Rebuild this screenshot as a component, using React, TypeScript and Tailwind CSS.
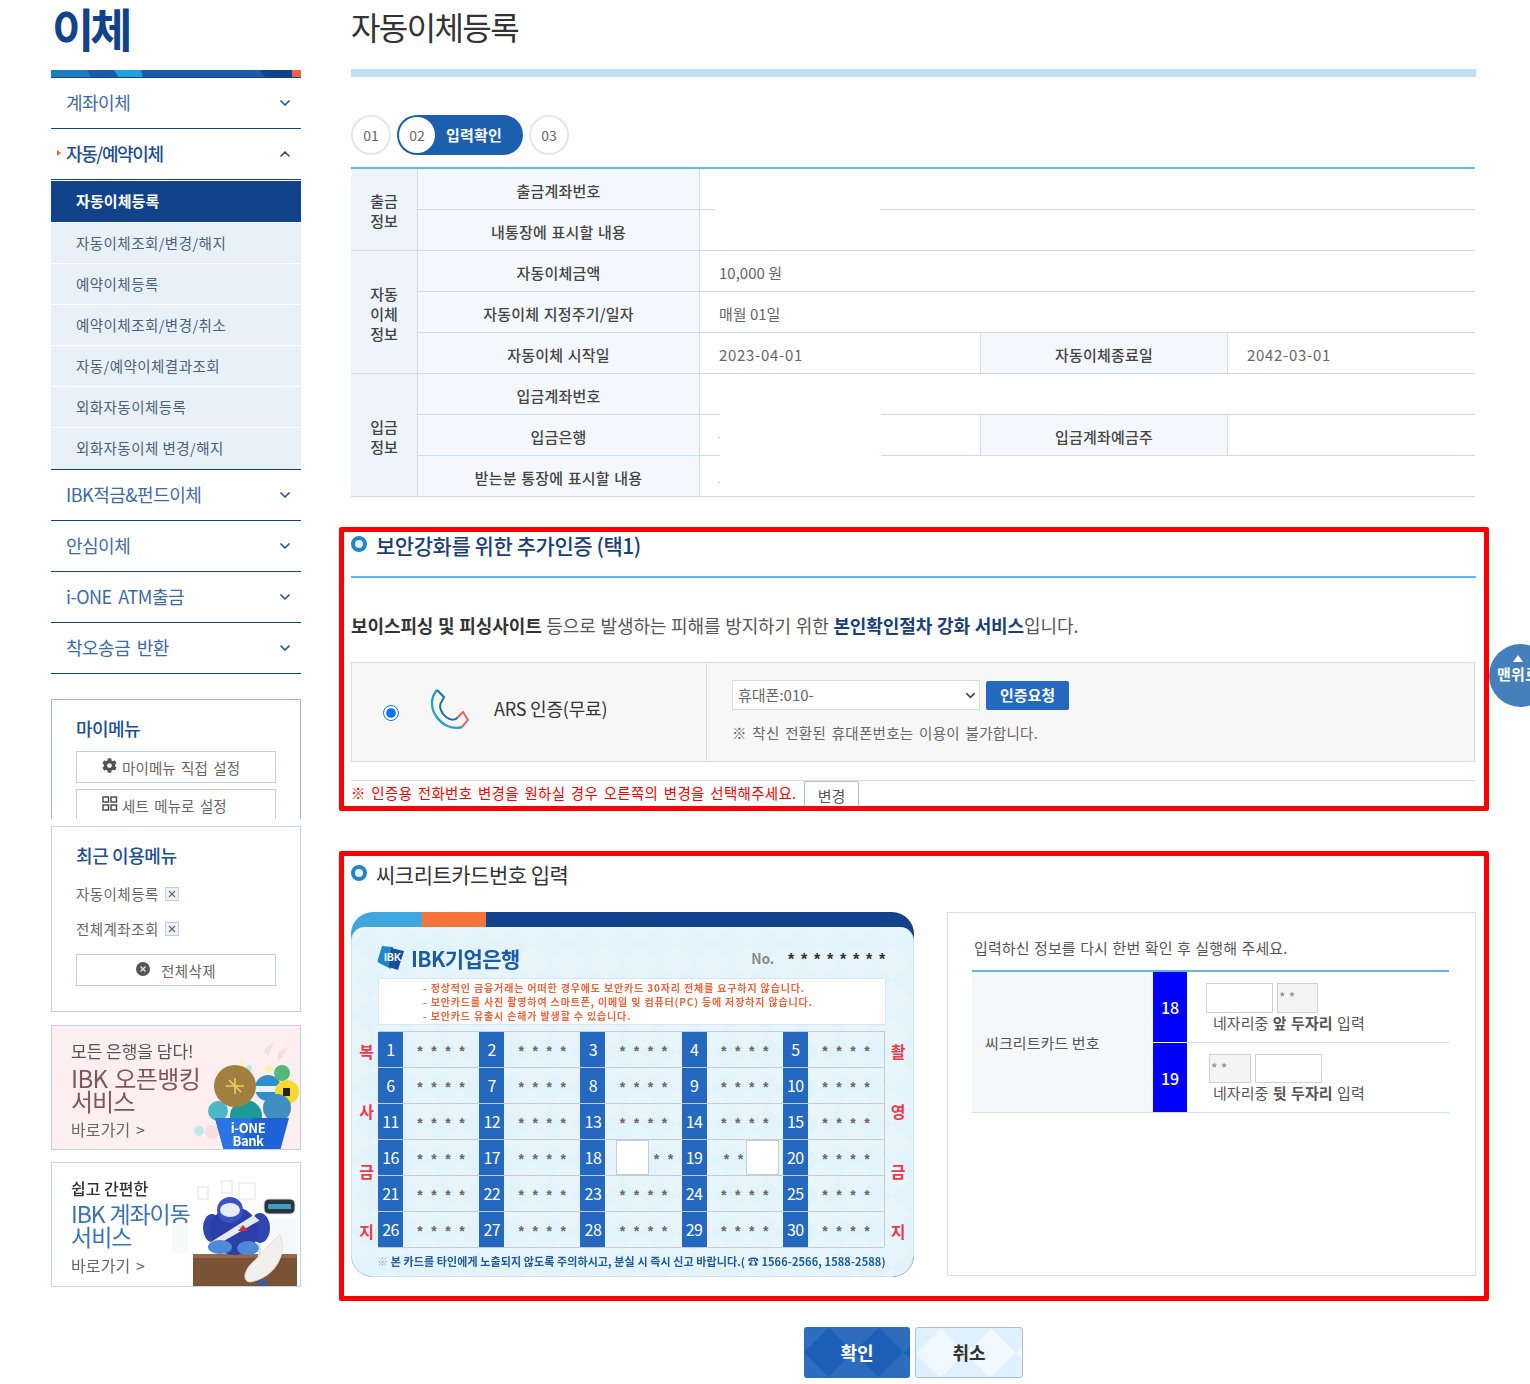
import React from "react";
import { ChevronDown, ChevronUp } from "lucide-react";
import { FaCog } from "react-icons/fa";

const subMenu = ["자동이체조회/변경/해지", "예약이체등록", "예약이체조회/변경/취소", "자동/예약이체결과조회", "외화자동이체등록", "외화자동이체 변경/해지"];
const lowerMenu = ["IBK적금&펀드이체", "안심이체", "i-ONE ATM출금", "착오송금 반환"];

function MenuRow({ label }: { label: string }) {
  return (
    <div className="h-[51px] border-b border-[#12438a] flex items-center justify-between pl-[15px] pr-[8px] pb-[1px]">
      <span className="text-[18px] tracking-[-0.5px] [word-spacing:3px] text-[#3d6aa6]">{label}</span>
      <ChevronDown size={16} strokeWidth={2.6} className="text-[#2a5590]" />
    </div>
  );
}

function Sidebar() {
  return (
    <aside className="w-[250px] flex-none">
      <div className="h-[70px] pl-[1px] text-[46px] leading-[54px] font-bold tracking-[-4px] text-[#12438a]">이체</div>
      <svg width="250" height="8" viewBox="0 0 250 8" className="block">
        <rect width="250" height="8" fill="#1a5ca8" />
        <polygon points="0,0 36,0 41,8 0,8" fill="#1d7cc4" />
        <polygon points="63,0 90,0 92,8 68,8" fill="#20a0df" />
        <polygon points="209,0 241,0 241,8 215,8" fill="#12438a" />
        <rect x="241" width="9" height="7" fill="#f4613e" />
        <rect y="7" width="250" height="1" fill="#12438a" />
      </svg>
      <MenuRow label="계좌이체" />
      <div className="h-[50px] flex items-center justify-between pl-[15px] pr-[8px] pb-[1px] relative">
        <span className="absolute left-[6px] top-[21px] w-0 h-0 border-y-[3px] border-y-transparent border-l-[4px] border-l-[#f4613e]" />
        <span className="text-[18px] tracking-[-1.4px] font-medium text-[#1c4f94]">자동/예약이체</span>
        <ChevronUp size={16} strokeWidth={2.6} className="text-[#2a5590]" />
      </div>
      <div className="h-[1px] bg-[#12438a]" />
      <div className="h-[1px]" />
      <div className="h-[41px] bg-[#12438a] pl-[25px] pb-[1px] flex items-center text-[15px] font-bold tracking-[0.1px] text-white">자동이체등록</div>
      {subMenu.map((s) => (
        <div key={s} className="h-[41px] bg-[#e8f1f8] border-t border-white pl-[25px] pb-[1px] flex items-center text-[14.5px] tracking-[0.45px] text-[#4a5f7d]">{s}</div>
      ))}
      <div className="h-[1px] bg-[#e8f1f8]" />
      <div className="h-[1px] bg-[#12438a]" />
      {lowerMenu.map((m) => <MenuRow key={m} label={m} />)}

      <div className="mt-[25px] h-[120px] overflow-hidden border-x border-t border-[#a3b2c6] pl-[24px] pr-[24px]">
        <div className="h-[51px] pt-[14px] text-[18px] leading-[28px] font-medium tracking-[-0.6px] text-[#1c4f94]">마이메뉴</div>
        <div className="h-[32px] pt-[1px] border border-[#bed0e5] flex items-center pl-[25px] gap-[5px] text-[14.5px] tracking-[0.1px] [word-spacing:2px] text-[#666]">
          <FaCog size={15} className="text-[#555] -translate-y-[2px]" />
          마이메뉴 직접 설정
        </div>
        <div className="mt-[6px] h-[32px] pt-[2px] border border-[#bed0e5] flex items-center pl-[25px] gap-[4px] text-[14.5px] tracking-[0.1px] [word-spacing:2px] text-[#666]">
          <svg width="16" height="15" viewBox="0 0 16 15" className="-translate-y-[3px]">
            <g fill="none" stroke="#444" strokeWidth="1.4">
              <rect x="1" y="1" width="5.5" height="5" />
              <rect x="9" y="1" width="5.5" height="5" />
              <rect x="1" y="9" width="5.5" height="5" />
              <rect x="9" y="9" width="5.5" height="5" />
            </g>
          </svg>
          세트 메뉴로 설정
        </div>
      </div>

      <div className="mt-[7px] h-[186px] border border-[#c1d2e6] px-[24px]">
        <div className="h-[50px] pt-[14px] text-[18px] leading-[28px] font-medium tracking-[-0.4px] text-[#1c4f94]">최근 이용메뉴</div>
        {["자동이체등록", "전체계좌조회"].map((s) => (
          <div key={s} className="h-[35px] pb-[2px] flex items-center gap-[6px] text-[14.5px] tracking-[0.45px] text-[#666]">
            {s}
            <span className="w-[14px] h-[14px] border border-[#bcd0e6] bg-[#eef2f7] flex items-center justify-center text-[#666]">
              <svg width="8" height="8" viewBox="0 0 8 8"><path d="M1 1 L7 7 M7 1 L1 7" stroke="#666" strokeWidth="1.1" /></svg>
            </span>
          </div>
        ))}
        <div className="mt-[7px] h-[32px] pt-[1px] border border-[#bed0e5] flex items-center justify-center gap-[11px] text-[14.5px] tracking-[0.45px] text-[#666]">
          <svg width="14" height="14" viewBox="0 0 14 14" className="-translate-y-[2px]">
            <circle cx="7" cy="7" r="7" fill="#555" />
            <path d="M4.5 4.5 L9.5 9.5 M9.5 4.5 L4.5 9.5" stroke="#ddd" strokeWidth="1.5" />
          </svg>
          전체삭제
        </div>
      </div>

      <div className="mt-[13px] h-[125px] relative overflow-hidden border border-[#bfd3ea] bg-[#fdeef0] pl-[19px]">
        <div className="blur-[0.4px]">
          <div className="pt-[12px] text-[17px] leading-[26px] text-[#555]">모든 은행을 담다!</div>
          <div className="mt-[2px] text-[24px] leading-[24px] tracking-[-0.6px] [word-spacing:2px] text-[#80565a]">IBK 오픈뱅킹</div>
          <div className="text-[24px] leading-[22px] tracking-[-1px] text-[#80565a]">서비스</div>
          <div className="mt-[4px] text-[16px] leading-[26px] tracking-[0.1px] [word-spacing:2px] text-[#666]">바로가기 &gt;</div>
        </div>
        <svg width="250" height="125" viewBox="0 0 250 125" className="absolute left-0 top-0 blur-[0.4px]">
          <path d="M212 24 L222 16 L216 30 Z M226 26 L238 20 L226 36 Z" fill="#f6dde0" />
          <circle cx="190" cy="37" r="3" fill="#fbf3c6" /><circle cx="197" cy="42" r="3" fill="#bde9e4" /><circle cx="217" cy="43" r="4" fill="#fbf0b0" />
          <circle cx="147" cy="105" r="5" fill="#bfe9e8" /><circle cx="160" cy="106" r="7" fill="#fbdde0" />
          <circle cx="166" cy="85" r="10" fill="#4fb6c6" />
          <circle cx="194" cy="90" r="16" fill="#1d9a9a" />
          <circle cx="216" cy="62" r="13" fill="#2e8fce" />
          <rect x="203" y="60" width="26" height="6" fill="#e5f3fb" />
          <circle cx="230" cy="47" r="8" fill="#55b87a" />
          <circle cx="235" cy="66" r="12" fill="#f8d92c" />
          <rect x="231" y="62" width="7" height="8" fill="#222" />
          <circle cx="225" cy="82" r="14" fill="#3f8fc0" />
          <circle cx="183" cy="60" r="21" fill="#a1803f" />
          <path d="M174 60 L192 60 M183 52 L183 68 M177 54 L189 66" stroke="#f6c960" strokeWidth="1.6" />
          <polygon points="163,92 237,92 228,125 172,125" fill="#1e62d8" />
          <polygon points="163,92 200,92 185,125 172,125" fill="#2a74e6" />
        </svg>
        <div className="absolute left-[168px] top-[95px] w-[56px] text-center text-white font-bold text-[13px] leading-[13px] tracking-[-0.4px] blur-[0.3px]">i-ONE<br />Bank</div>
      </div>

      <div className="mt-[12px] h-[125px] relative overflow-hidden border border-[#bfd3ea] bg-white pl-[19px]">
        <div className="blur-[0.4px]">
          <div className="pt-[12px] text-[16px] leading-[26px] font-medium text-[#333]">쉽고 간편한</div>
          <div className="text-[23px] leading-[24px] tracking-[-1.1px] [word-spacing:1px] text-[#3b74b6]">IBK 계좌이동</div>
          <div className="text-[23px] leading-[22px] tracking-[-1px] text-[#3b74b6]">서비스</div>
          <div className="mt-[5px] text-[16px] leading-[26px] tracking-[0.1px] [word-spacing:2px] text-[#666]">바로가기 &gt;</div>
        </div>
        <svg width="250" height="125" viewBox="0 0 250 125" className="absolute left-0 top-0 blur-[0.4px]">
          <g fill="none" stroke="#eef0f3" strokeWidth="2">
            <rect x="146" y="24" width="10" height="12" /><rect x="170" y="18" width="10" height="12" /><rect x="187" y="20" width="16" height="16" />
          </g>
          <rect x="120" y="60" width="16" height="30" fill="#f8f9fa" /><rect x="220" y="55" width="24" height="35" fill="#f6f7f8" />
          <rect x="141" y="91" width="104" height="34" fill="#7a5236" />
          <rect x="141" y="91" width="104" height="4" fill="#94684a" />
          <rect x="206" y="50" width="3" height="44" fill="#e0e0e0" />
          <rect x="212" y="36" width="31" height="15" rx="5" fill="#2b3340" stroke="#ddd" />
          <rect x="216" y="41" width="23" height="5" fill="#3ca0b8" />
          <ellipse cx="160" cy="65" rx="9" ry="14" fill="#2f45b4" />
          <ellipse cx="208" cy="65" rx="10" ry="15" fill="#2f45b4" />
          <ellipse cx="182" cy="68" rx="24" ry="24" fill="#2a3fa8" />
          <path d="M155 56 L205 72 L205 80 L155 62 Z" fill="#e6e9f0" transform="rotate(-50 182 66)" />
          <circle cx="178" cy="47" r="13" fill="#3a52c4" />
          <ellipse cx="178" cy="47" rx="10" ry="7" fill="#e8eef8" />
          <polygon points="186,68 196,68 191,62" fill="#d83030" />
          <ellipse cx="168" cy="84" rx="12" ry="7" fill="#4e8ad8" />
          <ellipse cx="196" cy="85" rx="11" ry="7" fill="#4e8ad8" />
          <path d="M228 72 C236 92 222 115 198 119 C190 118 192 108 200 100 C210 92 216 80 228 72 Z" fill="#f2f0ee" stroke="#e3dcd4" />
          <path d="M204 118 L210 125 L216 118 Z" fill="#2a5fb8" />
        </svg>
      </div>
    </aside>
  );
}

function Lbl({ children, className = "" }: { children: React.ReactNode; className?: string }) {
  return <td className={`pt-[4px] border-b border-r border-[#cddbe8] bg-[#f4f8fc] text-center text-[15px] font-medium tracking-[0.2px] [word-spacing:1px] text-[#444] ${className}`}>{children}</td>;
}
function Grp({ rows, children }: { rows: number; children: React.ReactNode }) {
  return <td rowSpan={rows} className="pt-[3px] border-b border-r border-[#cddbe8] bg-[#eef4fb] text-center text-[15px] leading-[20px] font-medium text-[#444]">{children}</td>;
}
function Val({ children, span, className = "" }: { children?: React.ReactNode; span?: number; className?: string }) {
  return <td colSpan={span} className={`pt-[4px] border-b border-[#cddbe8] pl-[19px] text-[15px] text-[#666] ${className}`}>{children}</td>;
}

function InfoTable() {
  return (
    <div className="relative">
      <table className="w-[1124px] table-fixed border-separate border-spacing-0 border-t-2 border-[#62b5e8]">
        <colgroup>
          <col className="w-[67px]" /><col className="w-[282px]" /><col className="w-[280px]" /><col className="w-[248px]" /><col className="w-[247px]" />
        </colgroup>
        <tbody>
          <tr className="h-[41px]"><Grp rows={2}>출금<br />정보</Grp><Lbl>출금계좌번호</Lbl><Val span={3} /></tr>
          <tr className="h-[41px]"><Lbl>내통장에 표시할 내용</Lbl><Val span={3} /></tr>
          <tr className="h-[41px]"><Grp rows={3}>자동<br />이체<br />정보</Grp><Lbl>자동이체금액</Lbl><Val span={3}>10,000 원</Val></tr>
          <tr className="h-[41px]"><Lbl>자동이체 지정주기/일자</Lbl><Val span={3}>매월 01일</Val></tr>
          <tr className="h-[41px]"><Lbl>자동이체 시작일</Lbl><Val className="tracking-[0.7px]">2023-04-01</Val><Lbl className="border-l">자동이체종료일</Lbl><Val className="tracking-[0.7px]">2042-03-01</Val></tr>
          <tr className="h-[41px]"><Grp rows={3}>입금<br />정보</Grp><Lbl>입금계좌번호</Lbl><Val span={3} /></tr>
          <tr className="h-[41px]"><Lbl>입금은행</Lbl><Val /><Lbl className="border-l">입금계좌예금주</Lbl><Val /></tr>
          <tr className="h-[41px]"><Lbl>받는분 통장에 표시할 내용</Lbl><Val span={3} /></tr>
        </tbody>
      </table>
      <div className="absolute left-[364px] top-[38px] w-[165px] h-[6px] bg-white" />
      <div className="absolute left-[369px] top-[243px] w-[161px] h-[46px] bg-white" />
      <div className="absolute left-[367px] top-[270px] w-[2px] h-[1px] bg-[#f3c66d]" />
      <div className="absolute left-[367px] top-[315px] w-[2px] h-[1px] bg-[#f3c66d]" />
    </div>
  );
}

function Star({ n = 4 }: { n?: number }) {
  return (
    <div className="flex gap-[6px] text-[#666] font-['Liberation_Sans',sans-serif] font-bold text-[14px] leading-[14px] pt-[3px]">
      {Array.from({ length: n }).map((_, i) => <span key={i} className="w-[8px] text-center">*</span>)}
    </div>
  );
}

const cellCls = "h-[36px] border-b border-[#c5ccd3] flex items-center justify-center";

function SecurityCard() {
  const cells: React.ReactNode[] = [];
  for (let n = 1; n <= 30; n++) {
    cells.push(<div key={`n${n}`} className="h-[36px] pb-[1px] border-b border-[#c5ccd3] bg-[#2468c0] text-white text-[16px] tracking-[-0.6px] flex items-center justify-center">{n}</div>);
    if (n === 18) {
      cells.push(<div key="s18" className={`${cellCls} justify-start pl-[11px] gap-[3px]`}><div className="w-[33px] h-[35px] bg-white border border-[#c5ccd3]" /><Star n={2} /></div>);
    } else if (n === 19) {
      cells.push(<div key="s19" className={`${cellCls} justify-start pl-[16px] gap-[1px]`}><Star n={2} /><div className="w-[33px] h-[35px] bg-white border border-[#c5ccd3]" /></div>);
    } else {
      cells.push(<div key={`s${n}`} className={cellCls}><Star /></div>);
    }
  }
  return (
    <div className="w-[563px] h-[365px] flex-none rounded-[22px] overflow-hidden bg-[linear-gradient(to_right,#3fa7dc_0,#3fa7dc_71px,#f5743a_71px,#f5743a_135px,#12438a_135px)]">
      <div className="mt-[15px] h-[350px] rounded-t-[14px] rounded-b-[22px] border border-t-0 border-[#cfe3f3] bg-[#e3f3fc] bg-[linear-gradient(45deg,#ffffff33_25%,transparent_25%,transparent_75%,#ffffff33_75%),linear-gradient(-45deg,#ffffff33_25%,transparent_25%,transparent_75%,#ffffff33_75%)] bg-[size:36px_36px] pt-[17px]">
        <div className="h-[28px] flex items-center pl-[25px] pr-[27px]">
          <svg width="28" height="26" viewBox="0 0 28 26">
            <path d="M5 1 L16 2 L14 24 L2 18 Q0 17 1 14 Z" fill="#1f86c8" />
            <path d="M14 3 L27 6 L21 25 L12 22 Z" fill="#164f9c" />
            <text x="7" y="16" fontSize="10" fontWeight="700" fill="#fff" fontFamily="Liberation Sans, sans-serif">IBK</text>
          </svg>
          <span className="ml-[6px] pt-[1px] text-[21px] font-bold tracking-[-0.6px] text-[#1a5ca8] blur-[0.3px]">IBK기업은행</span>
          <span className="ml-auto text-[14px] font-bold text-[#888] tracking-[-0.3px] blur-[0.3px]">No.</span>
          <span className="ml-[13px] flex gap-[5px] font-['Liberation_Sans',sans-serif] font-bold text-[16px] leading-[16px] pt-[3px] text-[#333]">
            {Array.from({ length: 8 }).map((_, i) => <span key={i} className="w-[8px] text-center">*</span>)}
          </span>
        </div>
        <div className="mt-[6px] ml-[26px] w-[508px] h-[47px] pt-[1px] bg-white border border-[#d7e6f2] pl-[44px] flex flex-col justify-center text-[10px] leading-[14px] font-bold tracking-[0.85px] whitespace-nowrap text-[#f0623a] blur-[0.2px]">
          <div>- 정상적인 금융거래는 어떠한 경우에도 보안카드 30자리 전체를 요구하지 않습니다.</div>
          <div>- 보안카드를 사진 촬영하여 스마트폰, 이메일 및 컴퓨터(PC) 등에 저장하지 않습니다.</div>
          <div>- 보안카드 유출시 손해가 발생할 수 있습니다.</div>
        </div>
        <div className="mt-[6px] flex h-[216px]">
          <div className="w-[26px] flex-none flex flex-col items-center gap-[36px] pt-[8px] pl-[3px] text-[16px] leading-[24px] font-bold text-[#f0384a]">
            <span>복</span><span>사</span><span>금</span><span>지</span>
          </div>
          <div className="w-[507px] flex-none grid grid-cols-[25px_1fr_25px_1fr_25px_1fr_25px_1fr_25px_1fr] border-t border-r border-[#c5ccd3] content-start">
            {cells}
          </div>
          <div className="flex-1 flex flex-col items-center gap-[36px] pt-[8px] pr-[2px] text-[16px] leading-[24px] font-bold text-[#f0384a]">
            <span>촬</span><span>영</span><span>금</span><span>지</span>
          </div>
        </div>
        <div className="mt-[4px] ml-[25px] h-[20px] flex items-center whitespace-nowrap text-[11px] font-bold tracking-[0.1px] text-[#1d5aa0] blur-[0.2px]">
          <span className="text-[#9db0c0]">※&nbsp;</span>본 카드를 타인에게 노출되지 않도록 주의하시고, 분실 시 즉시 신고 바랍니다.( ☎ 1566-2566, 1588-2588)
        </div>
      </div>
    </div>
  );
}

function InfoBox() {
  return (
    <div className="w-[529px] h-[364px] flex-none border border-[#cfe1f0] pl-[24px]">
      <div className="h-[57px] pt-[22px] pl-[2px] text-[15px] leading-[26px] tracking-[0.1px] [word-spacing:1px] text-[#555]">입력하신 정보를 다시 한번 확인 후 실행해 주세요.</div>
      <div className="w-[477px] flex border-t-2 border-[#62b5e8] border-b border-b-[#cddfee] text-[15px] text-[#555]">
        <div className="w-[181px] flex-none bg-[#f5f8fb] flex items-center pl-[13px] pt-[3px] tracking-[0.1px] ">씨크리트카드 번호</div>
        <div className="flex-1">
          <div className="h-[71px] flex border-b border-[#cddfee]">
            <div className="w-[34px] flex-none bg-[#0000ff] text-white text-[16px] font-medium flex items-center justify-center border-b border-white -mb-[1px]">18</div>
            <div className="pl-[19px] pt-[11px]">
              <div className="flex gap-[4px] h-[30px]">
                <div className="w-[67px] border border-[#d2d2d2] bg-white" />
                <div className="w-[41px] border border-[#d2d2d2] bg-[#f4f4f4] text-[14px] leading-[26px] pl-[1px] text-[#888]">* *</div>
              </div>
              <div className="pl-[7px] h-[22px] mt-[-1px] leading-[22px] tracking-[0.05px] [word-spacing:1px]">네자리중 <b className="font-bold">앞 두자리</b> 입력</div>
            </div>
          </div>
          <div className="h-[69px] flex">
            <div className="w-[34px] flex-none bg-[#0000ff] text-white text-[16px] font-medium flex items-center justify-center">19</div>
            <div className="pl-[22px] pt-[11px]">
              <div className="flex gap-[4px] h-[29px]">
                <div className="w-[42px] border border-[#d2d2d2] bg-[#f4f4f4] text-[14px] leading-[26px] pl-[1px] text-[#888]">* *</div>
                <div className="w-[67px] border border-[#d2d2d2] bg-white" />
              </div>
              <div className="pl-[4px] h-[22px] mt-[-1px] leading-[22px] tracking-[0.05px] [word-spacing:1px]">네자리중 <b className="font-bold">뒷 두자리</b> 입력</div>
            </div>
          </div>
        </div>
      </div>
    </div>
  );
}

function Bullet() {
  return <span className="w-[16px] h-[16px] rounded-full border-[4px] border-[#1f87c8] bg-[#e8f4fb] flex-none -translate-y-[2px]" />;
}

export default function App() {
  return (
    <div className="relative w-[1530px] h-[1384px] overflow-hidden bg-white font-['Noto_Sans_CJK_KR','Noto_Sans',sans-serif] flex pl-[51px]">
      <Sidebar />
      <main className="ml-[50px] w-[1125px] flex-none">
        <div className="h-[69px] text-[32px] leading-[52px] tracking-[-1.6px] text-[#333]">자동이체등록</div>
        <div className="h-[8px] bg-[#bde3f3]" />
        <div className="mt-[38px] h-[40px] flex gap-[6px] text-[14px] text-[#666]">
          <div className="w-[40px] h-[40px] rounded-full border-2 border-[#e6e6e6] flex items-center justify-center">01</div>
          <div className="w-[126px] h-[40px] rounded-full bg-[#1c5fad] p-[2px] flex items-center">
            <div className="w-[36px] h-[36px] rounded-full bg-white flex items-center justify-center">02</div>
            <span className="ml-[11px] text-[15px] font-bold tracking-[0.2px] text-white">입력확인</span>
          </div>
          <div className="w-[40px] h-[40px] rounded-full border-2 border-[#e6e6e6] flex items-center justify-center">03</div>
        </div>
        <div className="mt-[12px]"><InfoTable /></div>

        <section className="mt-[30px] -ml-[12px] -mr-[13px] h-[284px] overflow-hidden rounded-[2px] border-[5px] border-[#ff0000] pl-[7px] pr-[8px]">
          <div className="h-[28px] flex items-center gap-[9px]">
            <Bullet />
            <h2 className="text-[21px] tracking-[-0.45px] font-medium text-[#1a3f78]">보안강화를 위한 추가인증 (택1)</h2>
          </div>
          <div className="mt-[16px] h-[2px] bg-[#62b5e8]" />
          <p className="mt-[32px] h-[30px] leading-[30px] text-[18px] tracking-[-0.1px] [word-spacing:0.8px] text-[#555]">
            <b className="font-bold text-[#333]">보이스피싱 및 피싱사이트</b> 등으로 발생하는 피해를 방지하기 위한 <b className="font-bold text-[#1a3f78]">본인확인절차 강화 서비스</b>입니다.
          </p>
          <div className="mt-[22px] w-[1124px] h-[100px] flex border border-[#dddddd] bg-[#f7f7f7]">
            <div className="w-[355px] flex-none border-r border-[#dddddd] flex items-center">
              <input type="radio" checked readOnly className="ml-[31px] w-[16px] h-[16px] translate-y-[1px]" />
              <svg width="40" height="42" viewBox="0 0 40 42" className="ml-[32px] -translate-y-[2px]">
                <path d="M6 1 C-1 9 0 20 5 27 C11 36 21 41 31 38" fill="none" stroke="#2aa0c8" strokeWidth="2.4" />
                <path d="M6 1 L13 8 L11 12 C7 17 10 24 15 28 C20 32 25 31 27 28" fill="none" stroke="#1f6fa8" strokeWidth="2" />
                <path d="M27 28 L32 23 L37 31 L31 38" fill="none" stroke="#e8645a" strokeWidth="2" />
              </svg>
              <span className="ml-[23px] text-[18px] tracking-[-0.2px] text-[#333] -translate-y-[4px]">ARS 인증(무료)</span>
            </div>
            <div className="flex-1 pl-[25px] pt-[17px]">
              <div className="flex gap-[6px]">
                <div className="relative w-[248px] h-[30px]">
                  <select className="appearance-none w-full h-full border border-[#dddddd] bg-white text-[15px] pl-[5px] text-[#666] rounded-none">
                    <option>휴대폰:010-</option>
                  </select>
                  <ChevronDown size={15} strokeWidth={2.4} className="absolute right-[2px] top-[8px] text-[#444] pointer-events-none" />
                </div>
                <button className="mt-[1px] w-[83px] h-[29px] rounded-[2px] bg-[#2468c0] text-[15px] font-bold tracking-[-0.1px] text-white">인증요청</button>
              </div>
              <div className="mt-[10px] h-[26px] leading-[26px] text-[14.5px] tracking-[0.3px] [word-spacing:2px] text-[#666]">※ 착신 전환된 휴대폰번호는 이용이 불가합니다.</div>
            </div>
          </div>
          <div className="mt-[18px] w-[1124px] h-[1px] bg-[#cfe1ee]" />
          <div className="flex">
            <span className="w-[453px] h-[24px] leading-[24px] text-[14.5px] tracking-[0.3px] [word-spacing:2px] whitespace-nowrap text-[#ff0000]">※ 인증용 전화번호 변경을 원하실 경우 오른쪽의 변경을 선택해주세요.</span>
            <button className="w-[55px] h-[30px] border border-[#b5bcc4] rounded-t-[2px] bg-white text-[15px] text-[#555]">변경</button>
          </div>
        </section>

        <section className="mt-[40px] -ml-[12px] -mr-[13px] h-[450px] rounded-[2px] border-[5px] border-[#ff0000] pl-[7px] pr-[8px]">
          <div className="mt-[6px] h-[26px] flex items-center gap-[9px]">
            <Bullet />
            <h2 className="text-[21px] tracking-[-0.5px] text-[#333]">씨크리트카드번호 입력</h2>
          </div>
          <div className="mt-[24px] flex gap-[33px]">
            <SecurityCard />
            <InfoBox />
          </div>
        </section>

        <div className="mt-[26px] flex justify-center gap-[5px]">
          <button className="w-[106px] h-[51px] rounded-[3px] bg-[#1c5fb8] bg-[linear-gradient(45deg,#ffffff14_25%,transparent_25%,transparent_75%,#ffffff14_75%),linear-gradient(-45deg,#ffffff14_25%,transparent_25%,transparent_75%,#ffffff14_75%)] bg-[size:50px_50px] text-[18px] font-bold text-white">확인</button>
          <button className="w-[108px] h-[51px] rounded-[3px] border border-[#a9c1d4] bg-[#f0f8ff] bg-[linear-gradient(45deg,#dff0ff_25%,transparent_25%,transparent_75%,#dff0ff_75%),linear-gradient(-45deg,#dff0ff_25%,transparent_25%,transparent_75%,#dff0ff_75%)] bg-[size:50px_50px] text-[18px] font-bold text-[#333]">취소</button>
        </div>
      </main>

      <div className="absolute left-[1489px] top-[644px] w-[63px] h-[63px] rounded-full bg-[#4680bc] flex flex-col items-start pl-[8px] pt-[11px] text-white">
        <span className="ml-[16px] w-0 h-0 border-x-[5px] border-x-transparent border-b-[7px] border-b-white" />
        <span className="mt-[1px] whitespace-nowrap text-[15px] leading-[22px] font-bold tracking-[0.3px]">맨위로</span>
      </div>
    </div>
  );
}
